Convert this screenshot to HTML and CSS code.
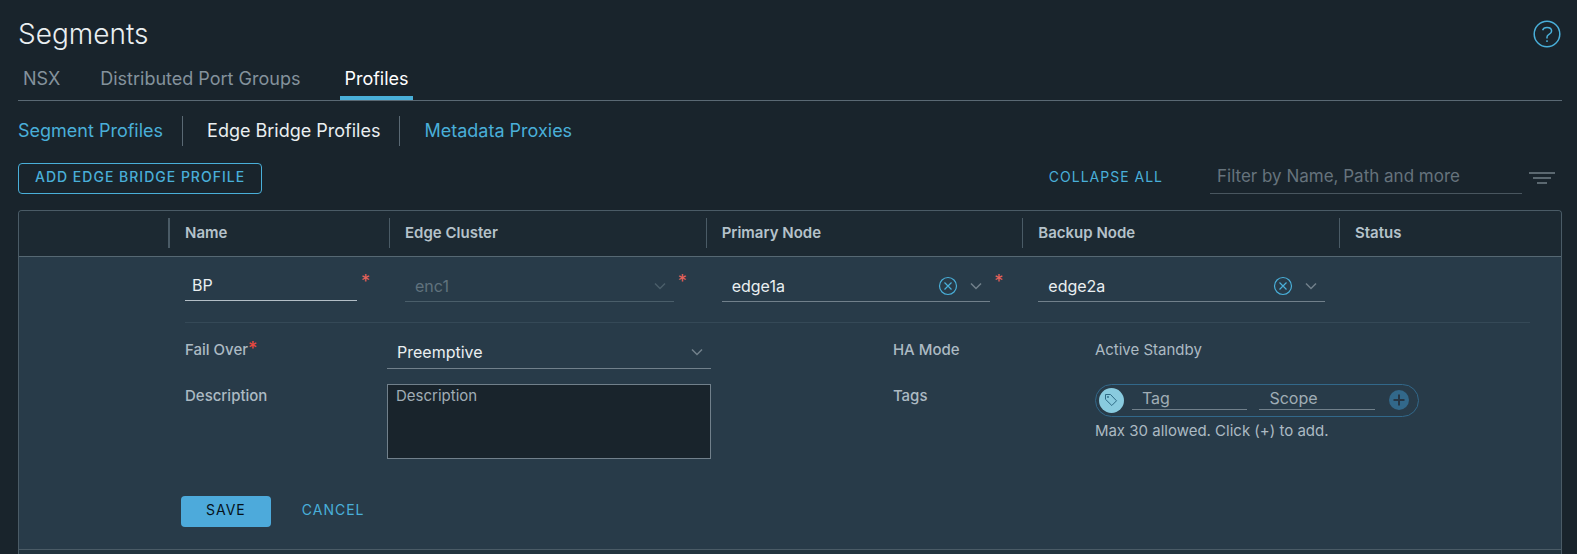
FILE: index.html
```html
<!DOCTYPE html>
<html lang="en">
<head>
<meta charset="utf-8">
<title>Segments</title>
<link rel="stylesheet" href="styles.css">
</head>
<body>
<main class="page">
  <header class="page-header">
    <h1 class="title">Segments</h1>
    <button class="icon-button" type="button" aria-label="Help">
      <svg class="help-icon" viewBox="0 0 28 28" fill="none" stroke="currentColor" stroke-width="1.5"><circle cx="14" cy="14" r="12.8"/><path d="M9.6 10.3c.5-1.7 2.2-2.8 4.4-2.8 2.7 0 4.6 1.400 4.600 3.500 0 1.800-1.300 2.700-2.600 3.400-1.300.7-2 1.300-2 2.600v1.500"/><path d="M14 20.300v1.700"/></svg>
    </button>
  </header>

  <nav class="tabs" aria-label="Segments">
    <a class="tab" href="#nsx">NSX</a>
    <a class="tab" href="#groups">Distributed Port Groups</a>
    <a class="tab tab-active" href="#profiles" aria-current="page">Profiles</a>
  </nav>

  <nav class="subtabs" aria-label="Profiles">
    <a class="subtab" href="#segment-profiles">Segment Profiles</a>
    <a class="subtab subtab-active" href="#edge-bridge" aria-current="page">Edge Bridge Profiles</a>
    <a class="subtab" href="#metadata">Metadata Proxies</a>
  </nav>

  <div class="toolbar">
    <button class="button button-outline" type="button">ADD EDGE BRIDGE PROFILE</button>
    <div class="toolbar-end">
      <button class="button button-link" type="button">COLLAPSE ALL</button>
      <input class="filter" type="text" placeholder="Filter by Name, Path and more" aria-label="Filter">
      <button class="icon-button filter-button" type="button" aria-label="Filter options">
        <svg class="filter-icon" viewBox="0 0 26 14" fill="none" stroke="currentColor" stroke-width="2"><path d="M0 2h26M4 7h18M8 12h10"/></svg>
      </button>
    </div>
  </div>

  <form class="grid-frame">
    <table class="grid">
      <colgroup><col class="col-actions"><col class="col-name"><col><col><col><col class="col-status"></colgroup>
      <thead>
        <tr>
          <td></td>
          <th><div class="head-cell head-first">Name</div></th>
          <th><div class="head-cell">Edge Cluster</div></th>
          <th><div class="head-cell">Primary Node</div></th>
          <th><div class="head-cell">Backup Node</div></th>
          <th><div class="head-cell">Status</div></th>
        </tr>
      </thead>
      <tbody>
        <tr class="edit-row">
          <td></td>
          <td><div class="cell cell-name"><input class="field name-field" type="text" value="BP" aria-label="Name"><span class="required">*</span></div></td>
          <td><div class="cell"><div class="field combo combo-disabled">
            <select class="combo-input" aria-label="Edge Cluster" disabled><option>enc1</option></select>
            <svg class="chevron" viewBox="0 0 12 8" fill="none" stroke="currentColor" stroke-width="1.5"><path d="M1 1.500l5 5 5-5"/></svg>
          </div><span class="required">*</span></div></td>
          <td><div class="cell"><div class="field combo">
            <input class="combo-input" type="text" value="edge1a" aria-label="Primary Node">
            <button class="icon-button clear" type="button" aria-label="Clear primary node"><svg class="clear-icon" viewBox="0 0 20 20" fill="none" stroke="currentColor" stroke-width="1.2"><circle cx="10" cy="10" r="8.500"/><path d="M6.500 6.500l7 7M13.500 6.500l-7 7"/></svg></button>
            <svg class="chevron" viewBox="0 0 12 8" fill="none" stroke="currentColor" stroke-width="1.5"><path d="M1 1.500l5 5 5-5"/></svg>
          </div><span class="required">*</span></div></td>
          <td><div class="cell"><div class="field combo">
            <input class="combo-input" type="text" value="edge2a" aria-label="Backup Node">
            <button class="icon-button clear" type="button" aria-label="Clear backup node"><svg class="clear-icon" viewBox="0 0 20 20" fill="none" stroke="currentColor" stroke-width="1.2"><circle cx="10" cy="10" r="8.500"/><path d="M6.500 6.500l7 7M13.500 6.500l-7 7"/></svg></button>
            <svg class="chevron" viewBox="0 0 12 8" fill="none" stroke="currentColor" stroke-width="1.5"><path d="M1 1.500l5 5 5-5"/></svg>
          </div></div></td>
          <td></td>
        </tr>
        <tr class="detail-row">
          <td></td>
          <td colspan="5">
            <div class="details">
              <div class="form-row form-row-tall">
                <label class="label" for="failover">Fail Over<span class="required-inline">*</span></label>
                <div class="combo control">
                  <select class="combo-input" id="failover"><option>Preemptive</option></select>
                  <svg class="chevron" viewBox="0 0 12 8" fill="none" stroke="currentColor" stroke-width="1.5"><path d="M1 1.500l5 5 5-5"/></svg>
                </div>
              </div>
              <div class="form-row form-row-tall">
                <span class="label">HA Mode</span>
                <span class="value">Active Standby</span>
              </div>
              <div class="form-row">
                <label class="label" for="description">Description</label>
                <textarea class="control description" id="description" placeholder="Description"></textarea>
              </div>
              <div class="form-row">
                <span class="label">Tags</span>
                <div class="control">
                  <div class="tag-box">
                    <span class="tag-badge"><svg class="tag-icon" viewBox="0 0 14 14" fill="none" stroke="currentColor" stroke-width="1"><path d="M1.500 1.500h5l6 6.300-4.700 4.700L1.500 6.300z" stroke-linejoin="round"/><circle cx="4" cy="4" r=".6"/></svg></span>
                    <input class="tag-input" type="text" placeholder="Tag" aria-label="Tag">
                    <input class="tag-input" type="text" placeholder="Scope" aria-label="Scope">
                    <button class="icon-button add-tag" type="button" aria-label="Add tag"><svg class="add-icon" viewBox="0 0 20 20"><circle cx="10" cy="10" r="10" fill="#32688a"/><path d="M10 4.500v11M4.500 10h11" stroke="#263645" stroke-width="2"/></svg></button>
                  </div>
                  <p class="hint">Max 30 allowed. Click (+) to add.</p>
                </div>
              </div>
            </div>
            <div class="actions">
              <button class="button button-solid" type="button">SAVE</button>
              <button class="button button-link" type="button">CANCEL</button>
            </div>
          </td>
        </tr>
      </tbody>
    </table>
  </form>
</main>
</body>
</html>
```
FILE: styles.css
```css
* { box-sizing: border-box; }
body {
  margin: 0;
  background: #19242c;
  color: #acbac3;
  font: 15px/20px Inter, "Open Sans", sans-serif;
  overflow: hidden;
}
button, input, select, textarea { font: inherit; color: inherit; margin: 0; border-radius: 0; outline: 0; }
a { text-decoration: none; }
svg { display: block; }

.page { display: flex; flex-direction: column; height: 100vh; padding: 16px 15px 0 18px; }
.page-header { display: flex; align-items: center; justify-content: space-between; height: 36px; padding-right: 1px; }
.title { margin: 0; color: #eaeff1; font-size: 28px; line-height: 36px; font-weight: 300; }
.icon-button { flex: none; padding: 0; border: 0; background: none; color: #49afd9; }
.help-icon { width: 28px; height: 28px; }

.tabs { display: flex; gap: 36px; height: 49px; padding-top: 8px; border-bottom: 1px solid #5a6974; }
.tab { padding: 7px 4px 0; color: #84929c; font-size: 18px; line-height: 24px; border-bottom: 4px solid transparent; }
.tab:first-child { padding: 7px 0 0 5px; }
.tab-active { color: #fff; border-color: #49afd9; }

.subtabs { display: flex; margin-top: 15px; }
.subtab { padding: 0 19px 0 24px; color: #49afd9; font-size: 18px; line-height: 30px; }
.subtab + .subtab { border-left: 1px solid #5a6974; }
.subtab:first-child { padding-left: 0; }
.subtab-active { color: #eaeff1; }

.toolbar { display: flex; align-items: center; justify-content: space-between; margin-top: 16px; height: 32px; }
.toolbar-end { display: flex; align-items: center; }
.button { flex: none; height: 31px; padding: 0 16px 2px; border: 1px solid transparent; border-radius: 4px; background: none; font-size: 14px; letter-spacing: 1px; color: #49afd9; }
.button-outline { border-color: #49afd9; font-weight: 500; }
.button-solid { background: #4daadb; color: #06121a; padding: 0 24px 2px; }
.filter { width: 312px; height: 32px; margin-left: 30px; padding: 0 7px 3px; border: 0; border-bottom: 1px solid #49565f; background: none; font-size: 17px; }
.filter::placeholder { color: #66737c; opacity: 1; }
.filter-button { padding: 0 7px; color: #5b6870; }
.filter-icon { width: 26px; height: 14px; }

.grid-frame { flex: 1; margin-top: 16px; border: 1px solid #4a5b66; border-bottom: 0; border-radius: 4px 4px 0 0; background: #22343e; overflow: hidden; }
.grid { width: 100%; table-layout: fixed; border-collapse: collapse; }
.grid td, .grid th { padding: 0; vertical-align: top; text-align: left; }
.grid thead { background: #1c2932; border-bottom: 1px solid #566873; }
.grid thead th { height: 45px; padding: 7px 0; }
.col-actions { width: 149px; }
.col-name { width: 221px; }
.col-status { width: 222px; }
.head-cell { padding-left: 15px; border-left: 1px solid #4a5b66; font-weight: 600; line-height: 30px; color: #b5c2ca; }
.head-first { border-left-width: 2px; }
.edit-row, .detail-row { background: #283b49; }
.detail-row { border-bottom: 1px solid #4a5b66; }

.cell { display: flex; padding: 14px 14px 20px 16px; }
.cell-name { padding-left: 17px; }
.field { flex: 1; min-width: 0; height: 31px; color: #eaeff1; }
.name-field { height: 30px; padding: 0 7px 1px; border: 0; border-bottom: 1px solid #b3bec6; background: none; font-size: 16px; }
.required { width: 18px; padding-left: 4px; color: #e8625a; font-size: 18px; line-height: 22px; }
.required-inline { color: #e8483f; font-size: 18px; line-height: 16px; }
.combo { display: flex; align-items: center; height: 31px; padding: 0 8px 0 10px; border-bottom: 1px solid #71808b; color: #eaeff1; }
.combo-input { flex: 1; min-width: 0; height: 30px; padding: 0; border: 0; background: none; appearance: none; font-size: 16px; opacity: 1; }
.combo-disabled { color: #60727d; border-color: #4a5e6a; }
.chevron { flex: none; width: 12px; height: 8px; color: #71808b; }
.combo-disabled .chevron { color: #4a5e6a; }
.clear { padding-right: 12px; }
.clear-icon { width: 20px; height: 20px; }

.details { display: grid; grid-template-columns: 10fr 9fr; margin: 0 31px 0 17px; padding-top: 13px; border-top: 1px solid #354957; row-gap: 15px; }
.form-row { display: grid; grid-template-columns: 202px 324px; align-items: start; }
.label, .value { line-height: 24px; }
.form-row-tall .label, .form-row-tall .value { line-height: 28px; }
.label { font-weight: 500; }
.control { width: 100%; }
.combo.control { height: 33px; }
.description { display: block; height: 75px; padding: 1px 8px; border: 1px solid #71808b; background: #19242c; resize: none; }
.description::placeholder, .tag-input::placeholder { color: #a0adb5; opacity: 1; }
.tag-box { display: flex; align-items: center; height: 33px; padding: 0 9px 0 3px; border: 1px solid #32688a; border-radius: 17px; }
.tag-badge { flex: none; display: grid; place-items: center; width: 25px; height: 25px; border-radius: 50%; background: #89cbdf; color: #2d6a85; }
.tag-icon { width: 14px; height: 14px; }
.tag-input { flex: 1; min-width: 0; height: 24px; margin: 0 0 4px 8px; padding: 0 10px; border: 0; border-bottom: 1px solid #71808b; background: none; font-size: 16px; }
.tag-input + .tag-input { margin-left: 12px; }
.add-tag { margin-left: 14px; }
.add-icon { width: 20px; height: 20px; }
.hint { margin: 4px 0 0; }
.actions { display: flex; gap: 14px; padding: 37px 0 22px 13px; }
```
